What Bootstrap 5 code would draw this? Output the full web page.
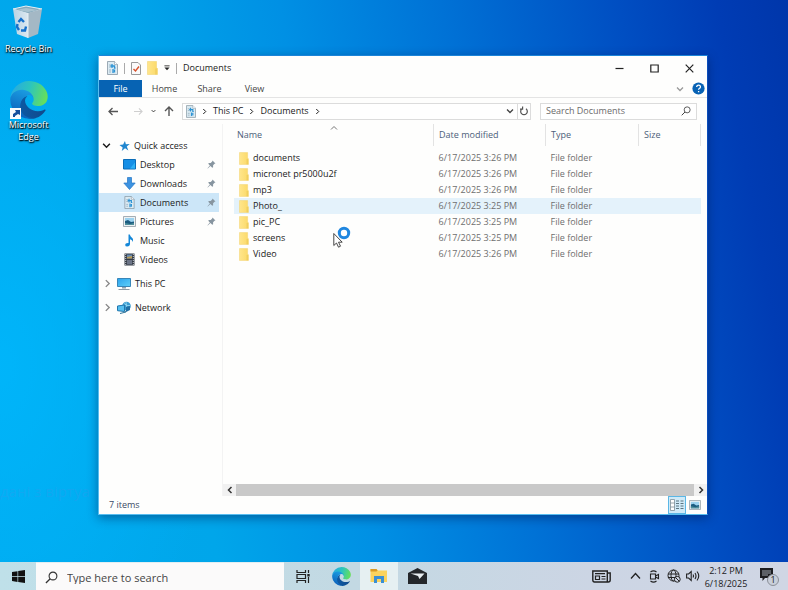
<!DOCTYPE html>
<html lang="en">
<head>
<meta charset="utf-8">
<meta name="viewport" content="width=device-width, initial-scale=1">
<title>Documents</title>
<link href="https://cdn.jsdelivr.net/npm/bootstrap@5.3.0/dist/css/bootstrap.min.css" rel="stylesheet">
<style>
body{font-family:"Open Sans","Noto Sans",sans-serif;font-size:9px;line-height:12px;color:#1b1b1b;
 background:radial-gradient(ellipse 220px 360px at 0 62%,rgba(0,186,255,.7),rgba(0,186,255,0)),linear-gradient(80deg,#00a9ee 0%,#00a6ea 25%,#0090e4 43%,#0072d6 61%,#004ec2 81%,#003cb4 92%,#0036aa 100%)}
button{color:inherit;background:none;border:0;padding:0;line-height:12px}
a{color:inherit;text-decoration:none}
svg{display:block;flex:none}
.desk-icons{width:57px;padding-top:5px;gap:26px}
.desk-icons a{color:#fff;text-shadow:0 1px 2px #000,1px 1px 1px #000;line-height:12px}
.ghost{left:0;bottom:59px;font-size:15px;line-height:24px;color:rgba(60,150,235,.3);z-index:0}
.win{margin:55px 80px 47px 41px;background:#fefefd;border:1px solid #58bdf0;border-right-color:#0a4dbb;border-top-color:#1c84d8;box-shadow:0 3px 10px rgba(0,20,70,.45);z-index:1;min-width:0}
.titlebar{height:24px;padding-left:8px;gap:6px}
.vsep{width:1px;height:11px;background:#aaa}
.ctl{width:35px;height:23px}
.ribbon{height:18px;padding-right:2px;border-bottom:1px solid #e4e4e4;color:#444}
.ribbon .file-tab{width:43px;background:#0763b3;color:#fff}
.ribbon .tab{width:45px}
.ribbon .expand{color:#999}
.addr-row{height:26px;padding:0 10px 0 9px;gap:9px}
.addr,.search-box{height:17px;border:1px solid #dcdcdc;background:#fff}
.addr{gap:6px;padding-left:3px}
.refresh{width:13px;height:15px;border-left:1px solid #dcdcdc}
.drop{margin-right:-3px;color:#444}
.search-box{width:157px;padding:0 5px}
.search-box input{border:0;outline:0;background:none;padding:0;font-size:9px;color:#333}
.search-box input::placeholder{color:#6b6b6b;opacity:1}
.side{width:124px;padding-top:12px;border-right:1px solid #f3f3f3}
.side a{height:19px;margin-right:3px}
.side .sub{padding:0 3px 0 24px;gap:4px}
.side .top-item{padding-left:3px;gap:4px}
.side .spaced{margin-top:5px}
.side .picked{background:#cce6f8}
.files{margin:0 6px 0 11px}
.files table{table-layout:fixed;width:100%;border-collapse:collapse}
.files th{height:22px;font-weight:400;color:#4c607a;padding:0 0 0 5px;border-right:1px solid #e3e3e3;position:relative}
.files th:first-child{padding-left:3px}
.files td{height:16px;padding:0 0 0 5px;color:#6e6e6e;white-space:nowrap}
.files td:first-child{color:#1b1b1b}
.files .gap-row td{height:4px}
.files tr.hover-row{background:#e4f2fb}
.c-date{width:112px}.c-type{width:93px}.c-size{width:62px}
.sort{left:50%;top:1px;margin-left:-4px}
.hbar{height:12px;background:#f1f1f1}
.hbar button{width:13px}
.thumb{background:#c9c9c9}
.status{height:18px;padding:0 4px 0 10px;color:#3a4a66}
.view-on{width:18px;height:18px;background:#cfeaf8;border:1px solid #5bb7e6}
.view-off{width:17px;height:18px}
.pointer{left:234px;top:168px;z-index:2;pointer-events:none}
.taskbar{height:28px;background:linear-gradient(90deg,#bfe0e9,#c3d9e3 45%,#ccd5e4 75%,#d0d6e4);z-index:2}
.start{width:36px}
.task-search{width:248px;background:#fbfafa;padding:2px 9px 0;gap:9px;border-top:1px solid #e2eef2}
.task-search input{border:0;outline:0;background:none;padding:0;font-size:11px;color:#333}
.task-search input::placeholder{color:#454545;opacity:1}
.task{width:38px}
.task-on{background:#e6f0f2}
.tray{width:19px}
.news{width:24px;margin-right:13px}
.clock{width:48px;line-height:13px;padding-top:1px}
</style>
<script src="https://cdn.jsdelivr.net/npm/bootstrap@5.3.0/dist/js/bootstrap.bundle.min.js"></script>
</head>
<body class="vh-100 d-flex flex-column overflow-hidden">
<svg width="0" height="0" class="position-absolute" aria-hidden="true">
<defs>
<linearGradient id="eg1" x1="0" x2="1"><stop offset="0" stop-color="#0c59a4"/><stop offset="1" stop-color="#114a8b"/></linearGradient>
<linearGradient id="eg2" x1=".6" y1="0" x2=".3" y2="1"><stop offset="0" stop-color="#1ba0e4"/><stop offset="1" stop-color="#0a5cb8"/></linearGradient>
<linearGradient id="eg3" x1="0" y1=".3" x2="1" y2=".5"><stop offset="0" stop-color="#28a8e4"/><stop offset=".5" stop-color="#2cc5bd"/><stop offset="1" stop-color="#67df5b"/></linearGradient>
<linearGradient id="fold" x1="0" x2="1"><stop offset="0" stop-color="#ffe68c"/><stop offset="1" stop-color="#fbd968"/></linearGradient>
<linearGradient id="scr" x1="0" y1="0" x2="1" y2="1"><stop offset="0" stop-color="#2ba3ee"/><stop offset="1" stop-color="#5fd0f8"/></linearGradient>
<linearGradient id="binface" x1="0" x2="1"><stop offset="0" stop-color="#b9d3e4"/><stop offset="1" stop-color="#dce8f0"/></linearGradient>
</defs>
<symbol id="edge" viewBox="0 0 256 260"><path fill="url(#eg1)" d="M235.680 195.460a93.730 93.730 0 0 1-10.540 4.710 101.870 101.870 0 0 1-35.900 6.460c-47.320 0-88.540-32.550-88.540-74.320A31.480 31.480 0 0 1 117.130 105c-42.800 1.800-53.800 46.400-53.800 72.530 0 73.880 68.090 81.370 82.760 81.370 7.910 0 19.840-2.300 27-4.560l1.310-.44a128.340 128.340 0 0 0 66.600-52.800 4 4 0 0 0-5.320-5.640z"/><path fill="url(#eg2)" d="M105.730 241.420a79.200 79.200 0 0 1-22.740-21.340 80.720 80.720 0 0 1 29.530-120c3.120-1.470 8.450-4.130 15.540-4a32.350 32.350 0 0 1 25.690 13 31.880 31.880 0 0 1 6.360 18.660c0-.21 24.460-79.600-80-79.600-43.900 0-80 41.660-80 78.210a130.150 130.150 0 0 0 12.110 56 128 128 0 0 0 156.380 67.110 75.550 75.550 0 0 1-62.780-8z"/><path fill="url(#eg3)" d="M152.330 148.860c-.81 1.050-3.300 2.500-3.300 5.660 0 2.610 1.700 5.120 4.720 7.230 14.380 10 41.490 8.680 41.560 8.680a59.560 59.560 0 0 0 30.270-8.350 61.380 61.380 0 0 0 30.430-52.880c.26-22.410-8-37.310-11.340-43.910C223.460 23.840 177.720 0 128 0A128 128 0 0 0 0 126.200c.48-36.540 36.800-66.050 80-66.050 3.500 0 23.460.34 42 10.070 16.340 8.580 24.900 18.940 30.850 29.210 6.180 10.670 7.280 24.150 7.280 29.520s-2.740 13.330-7.800 19.910z"/></symbol>
<symbol id="folder" viewBox="0 0 11 14"><path d="M.5.5h9v6l1 1v6H.5z" fill="url(#fold)" stroke="#f3d574" stroke-width=".6"/><path d="M9 7.500v6" stroke="#e6c252" stroke-width=".8"/></symbol>
<symbol id="doc" viewBox="0 0 11 14"><path d="M.5.5h7l3 3v10H.5z" fill="#dcebf3" stroke="#8797a3" stroke-width=".8"/><path d="M7.500.5v3h3" fill="#fff" stroke="#8797a3" stroke-width=".6"/><path d="M2 4h2M2 6h2M2 9h2M2 11h2" stroke="#8fa9b9" stroke-width=".8"/><path d="M5 3v4M3.500 5h4v2h1M6 8v4M7.500 8.500v3" stroke="#2c93d4" stroke-width="1.300" fill="none"/></symbol>
<symbol id="pin" viewBox="0 0 9 9"><path d="M5.500.5l3 3-1 .3-1.400 1.500v1.900l-.8.6-1.900-1.900L.8 8.500l-.3-.3 2.400-2.700L1.200 3.800l.7-.7h1.800l1.500-1.500z" fill="#8795a0"/></symbol>
<symbol id="right" viewBox="0 0 6 8"><path d="M1.500 1l3 3-3 3" fill="none" stroke="currentColor" stroke-width="1.200"/></symbol>
<symbol id="down" viewBox="0 0 8 6"><path d="M1 1.500l3 3 3-3" fill="none" stroke="currentColor" stroke-width="1.300"/></symbol>
<symbol id="lens" viewBox="0 0 14 14"><circle cx="8.600" cy="5.400" r="4.200" fill="none" stroke="currentColor" stroke-width="1.200"/><path d="M5.600 8.400L1 13" stroke="currentColor" stroke-width="1.400"/></symbol>
<symbol id="picture" viewBox="0 0 13 11"><path d="M.5.5h12v10H.5z" fill="#edf1f3" stroke="#8f9ba3" stroke-width=".8"/><path d="M2 2h9v7H2z" fill="#9cd2ef"/><path d="M2 5l3-1 3 2 3-.5V9H2z" fill="#1c5c80"/><path d="M2 7l5 1 4-1v2H2z" fill="#4f8f9b"/></symbol>
</svg>

<main class="flex-grow-1 d-flex align-items-stretch position-relative">
 <span class="ghost position-absolute text-nowrap">дані з віртуа</span>
 <nav class="desk-icons d-flex flex-column flex-shrink-0 align-items-center text-center text-nowrap" aria-label="Desktop">
  <a href="#" class="d-flex flex-column align-items-center gap-1">
   <svg width="32" height="34" viewBox="0 0 32 34"><path d="M1 4l13-3 16 3-14 5z" fill="#84a9bd" stroke="#e6f0f5" stroke-width="1"/><path d="M4 5l10-2 12 2-10 2z" fill="#a9c3d0"/><path d="M1 4l15 4v25L5 29z" fill="url(#binface)"/><path d="M16 8l14-4-4 25-10 4z" fill="#a4b8c5"/><path d="M16 8v25" stroke="#e6eef3"/><path d="M6.500 17l2.500-3 3 3M5.500 19l-.500 3 2 3M9 25.500h4l1-4" stroke="#1570cb" stroke-width="2.400" fill="none"/></svg>
   <span>Recycle Bin</span></a>
  <a href="#" class="d-flex flex-column align-items-center">
   <span class="position-relative"><svg width="38" height="38"><use href="#edge"/></svg>
    <svg class="position-absolute start-0 bottom-0" width="11" height="11" viewBox="0 0 11 11"><path d="M0 0h11v11H0z" fill="#f7fafc"/><path d="M3 9V6l3-2-1-2h5v5L8 6 5 8v1z" fill="#134f9c"/></svg></span>
   <span>Microsoft<br>Edge</span></a>
 </nav>

 <section class="win flex-grow-1 d-flex flex-column position-relative" aria-label="Documents">
  <header class="titlebar d-flex align-items-center">
   <svg width="11" height="14"><use href="#doc"/></svg>
   <span class="vsep"></span>
   <svg width="10" height="13" viewBox="0 0 10 13"><path d="M.5.5h6.500l2.500 2.500v9.500h-9z" fill="#fafafa" stroke="#999"/><path d="M2.500 7l2 2 3.500-4.500" fill="none" stroke="#d8522c" stroke-width="1.400"/></svg>
   <svg width="11" height="14"><use href="#folder"/></svg>
   <button aria-label="Customize toolbar"><svg width="6" height="6" viewBox="0 0 7 7"><path d="M.5 1h6" stroke="#222"/><path d="M.5 3h6l-3 3z" fill="#222"/></svg></button>
   <span class="vsep"></span>
   <span>Documents</span>
   <div class="ms-auto d-flex">
    <button class="ctl d-grid" aria-label="Minimize"><svg class="m-auto" width="9" height="9" viewBox="0 0 9 9"><path d="M.5 4.500h8" stroke="#222" stroke-width="1.200"/></svg></button>
    <button class="ctl d-grid" aria-label="Maximize"><svg class="m-auto" width="9" height="9" viewBox="0 0 9 9"><path d="M.8 1h7.400v7H.8z" fill="none" stroke="#222" stroke-width="1.200"/></svg></button>
    <button class="ctl d-grid" aria-label="Close"><svg class="m-auto" width="9" height="9" viewBox="0 0 9 9"><path d="M.7.7l7.600 7.600M8.300.7L.7 8.300" stroke="#222" stroke-width="1.200"/></svg></button>
   </div>
  </header>
  <div class="ribbon d-flex align-items-stretch">
   <button class="file-tab">File</button><button class="tab">Home</button><button class="tab">Share</button><button class="tab">View</button>
   <button class="expand ms-auto me-2" aria-label="Expand ribbon"><svg width="8" height="6"><use href="#down"/></svg></button>
   <button aria-label="Help"><svg width="13" height="13" viewBox="0 0 13 13"><circle cx="6.500" cy="6.500" r="6.100" fill="#0862b4"/><path d="M4.700 5q0-1.800 1.900-1.800T8.400 4.900Q8.400 6 7.300 6.500q-.7.400-.7 1.300M6.600 9v1.300" fill="none" stroke="#fff" stroke-width="1.300"/></svg></button>
  </div>
  <div class="addr-row d-flex align-items-center">
   <div class="d-flex align-items-center flex-grow-1">
    <button aria-label="Back"><svg width="10" height="9" viewBox="0 0 10 9"><path d="M10 4.500H1M4.500 1L1 4.500 4.500 8" fill="none" stroke="#555" stroke-width="1.300"/></svg></button>
    <button class="ms-3" aria-label="Forward"><svg width="9" height="9" viewBox="0 0 10 9"><path d="M0 4.500h9M5.500 1L9 4.500 5.500 8" fill="none" stroke="#cfcfcf" stroke-width="1.200"/></svg></button>
    <button class="ms-2" aria-label="Recent locations"><svg width="5" height="4"><use href="#down"/></svg></button>
    <button class="ms-2" aria-label="Up"><svg width="10" height="10" viewBox="0 0 10 10"><path d="M5 10V1M1 5l4-4 4 4" fill="none" stroke="#555" stroke-width="1.400"/></svg></button>
    <div class="addr d-flex align-items-center flex-grow-1 ms-2">
     <svg width="10" height="13"><use href="#doc"/></svg>
     <svg width="5" height="7"><use href="#right"/></svg><a href="#">This PC</a>
     <svg width="5" height="7"><use href="#right"/></svg><a href="#">Documents</a>
     <svg width="5" height="7"><use href="#right"/></svg>
     <button class="drop ms-auto" aria-label="Previous locations"><svg width="8" height="6"><use href="#down"/></svg></button>
     <button class="refresh d-grid" aria-label="Refresh"><svg class="m-auto" width="8" height="10" viewBox="0 0 8 10"><path d="M6 2.800A3.300 3.300 0 1 1 2 2.800M2.600.4v2.700H0" fill="none" stroke="#555" stroke-width="1.200"/></svg></button>
    </div>
   </div>
   <div class="search-box d-flex align-items-center"><input class="flex-grow-1 w-100" type="search" placeholder="Search Documents" aria-label="Search Documents"><svg width="10" height="10" color="#444"><use href="#lens"/></svg></div>
  </div>
  <div class="d-flex flex-grow-1 align-items-stretch">
   <nav class="side d-flex flex-column flex-shrink-0" aria-label="Folders">
    <a href="#" class="top-item d-flex align-items-center"><svg class="me-1" width="9" height="7"><use href="#down"/></svg><svg width="11" height="12" viewBox="0 0 12 12"><path d="M6.500.5l1 3.500 4.200-.3L8.500 6.500l1.700 4.300-3.600-2.300L3 11.500l1-4L.5 5l4-.6z" fill="#2186cf"/></svg><span>Quick access</span></a>
    <a href="#" class="sub d-flex align-items-center"><svg width="13" height="11" viewBox="0 0 13 11"><path d="M.5.5h12v9.500H.5z" fill="#168fe6" stroke="#0b6db8"/><path d="M7 9.500l5-6v6z" fill="#2eb0f5"/></svg><span>Desktop</span><svg class="ms-auto" width="9" height="9"><use href="#pin"/></svg></a>
    <a href="#" class="sub d-flex align-items-center"><svg width="13" height="13" viewBox="0 0 13 13"><path d="M4.500.5h4V6h3.700l-5.700 6.500L.8 6h3.700z" fill="#3d93e1" stroke="#2376c6" stroke-width=".7"/></svg><span>Downloads</span><svg class="ms-auto" width="9" height="9"><use href="#pin"/></svg></a>
    <a href="#" class="sub picked d-flex align-items-center"><svg width="13" height="13"><use href="#doc"/></svg><span>Documents</span><svg class="ms-auto" width="9" height="9"><use href="#pin"/></svg></a>
    <a href="#" class="sub d-flex align-items-center"><svg width="13" height="11"><use href="#picture"/></svg><span>Pictures</span><svg class="ms-auto" width="9" height="9"><use href="#pin"/></svg></a>
    <a href="#" class="sub d-flex align-items-center"><svg width="13" height="13" viewBox="0 0 13 13"><path d="M5.500.5h1.300q.4 2 2.200 3.300t.5 4.200q.1-2-2.500-2.800v5q-.3 2.300-2.800 2.300-2 0-2-1.500 0-2.200 3.300-2z" fill="#1487d8"/></svg><span>Music</span></a>
    <a href="#" class="sub d-flex align-items-center"><svg width="13" height="13" viewBox="0 0 13 13"><path d="M1.500.5h10v12h-10z" fill="#353c46"/><path d="M4 1.500h5v4H4z" fill="#678ab1"/><path d="M4 7h5v4.500H4z" fill="#6b7486"/><path d="M4 4l5-1v2.500H4z" fill="#b79c58"/><path d="M2.700 1v11M10.300 1v11" stroke="#c6cbd1" stroke-dasharray="1"/></svg><span>Videos</span></a>
    <a href="#" class="top-item spaced d-flex align-items-center"><svg width="11" height="9" color="#888"><use href="#right"/></svg><svg width="14" height="14" viewBox="0 0 14 14"><path d="M.5 1.500h13v8H.5z" fill="url(#scr)" stroke="#3886b8"/><path d="M5 10h4v1.500H5z" fill="#8fa2ae"/><path d="M1.500 12.500h11" stroke="#8d9ba5"/></svg><span>This PC</span></a>
    <a href="#" class="top-item spaced d-flex align-items-center"><svg width="11" height="9" color="#888"><use href="#right"/></svg><svg width="14" height="14" viewBox="0 0 14 14"><circle cx="9.500" cy="5" r="4.300" fill="#399bd0"/><path d="M7 2.500l3 2 3 0M9 1l1 8" stroke="#9bdaf2" fill="none" stroke-width=".8"/><path d="M.5 5l7-1v6.500l-7-.8z" fill="#55bff0" stroke="#2176ad"/><path d="M3 12.500l6-1.500-1-1.500" fill="none" stroke="#2f7498"/><path d="M9 6l4-1v4l-4 2z" fill="#1f6ea4"/></svg><span>Network</span></a>
   </nav>
   <div class="flex-grow-1 d-flex flex-column">
    <div class="files">
     <table>
      <colgroup><col><col class="c-date"><col class="c-type"><col class="c-size"></colgroup>
      <thead><tr><th>Name<svg class="sort position-absolute" width="8" height="6" viewBox="0 0 8 6"><path d="M1 4.500l3-3 3 3" fill="none" stroke="#777"/></svg></th><th>Date modified</th><th>Type</th><th>Size</th></tr></thead>
      <tbody>
      <tr class="gap-row"><td colspan="4"></td></tr>
      <tr><td><span class="d-flex align-items-center gap-1"><svg width="10" height="13"><use href="#folder"/></svg>documents</span></td><td>6/17/2025 3:26 PM</td><td>File folder</td><td></td></tr>
      <tr><td><span class="d-flex align-items-center gap-1"><svg width="10" height="13"><use href="#folder"/></svg>micronet pr5000u2f</span></td><td>6/17/2025 3:26 PM</td><td>File folder</td><td></td></tr>
      <tr><td><span class="d-flex align-items-center gap-1"><svg width="10" height="13"><use href="#folder"/></svg>mp3</span></td><td>6/17/2025 3:26 PM</td><td>File folder</td><td></td></tr>
      <tr class="hover-row"><td><span class="d-flex align-items-center gap-1"><svg width="10" height="13"><use href="#folder"/></svg>Photo_</span></td><td>6/17/2025 3:25 PM</td><td>File folder</td><td></td></tr>
      <tr><td><span class="d-flex align-items-center gap-1"><svg width="10" height="13"><use href="#folder"/></svg>pic_PC</span></td><td>6/17/2025 3:25 PM</td><td>File folder</td><td></td></tr>
      <tr><td><span class="d-flex align-items-center gap-1"><svg width="10" height="13"><use href="#folder"/></svg>screens</span></td><td>6/17/2025 3:25 PM</td><td>File folder</td><td></td></tr>
      <tr><td><span class="d-flex align-items-center gap-1"><svg width="10" height="13"><use href="#folder"/></svg>Video</span></td><td>6/17/2025 3:26 PM</td><td>File folder</td><td></td></tr>
      </tbody>
     </table>
    </div>
    <div class="hbar d-flex mt-auto">
     <button class="d-grid" aria-label="Scroll left"><svg class="m-auto" width="6" height="8" viewBox="0 0 6 8"><path d="M4.500 1l-3 3 3 3" fill="none" stroke="#333" stroke-width="1.500"/></svg></button>
     <div class="thumb flex-grow-1"></div>
     <button class="d-grid" aria-label="Scroll right"><svg class="m-auto" width="6" height="8" viewBox="0 0 6 8"><path d="M1.500 1l3 3-3 3" fill="none" stroke="#333" stroke-width="1.500"/></svg></button>
    </div>
   </div>
  </div>
  <footer class="status d-flex align-items-center">
   <span>7 items</span>
   <button class="view-on d-grid ms-auto" aria-label="Details view"><svg class="m-auto" width="14" height="12" viewBox="0 0 14 12"><path d="M.5.5h4v11h-4zM.5 4h4M.5 8h4" fill="#fff" stroke="#7f8f98" stroke-width=".8"/><path d="M6 2h3M10.500 2h3M6 4.500h3M10.500 4.500h3M6 7h3M10.500 7h3M6 9.500h3M10.500 9.500h3" stroke="#5b7480"/></svg></button>
   <button class="view-off d-grid" aria-label="Thumbnail view"><svg class="m-auto" width="12" height="10"><use href="#picture"/></svg></button>
  </footer>
  <svg class="pointer position-absolute" width="20" height="24" viewBox="0 0 20 24"><circle cx="11" cy="9" r="4.700" fill="#fff" stroke="#2087e0" stroke-width="3"/><path d="M.8 9.500v12l2.700-2.500 2 4.200 2-1-2-4h3.700z" fill="#fff" stroke="#333" stroke-width=".9"/></svg>
 </section>
</main>

<footer class="taskbar d-flex align-items-stretch flex-shrink-0">
 <button class="start d-grid" aria-label="Start"><svg class="m-auto" width="13" height="13" viewBox="0 0 13 13"><path d="M0 2l5.500-.8v5H0zM6.200 1L13 0v6.200H6.200zM0 6.900h5.500v5L0 11.100zM6.200 6.900H13V13l-6.800-1z" fill="#111"/></svg></button>
 <div class="task-search d-flex align-items-center"><svg width="13" height="13" color="#333"><use href="#lens"/></svg><input class="flex-grow-1" type="search" placeholder="Type here to search" aria-label="Type here to search"></div>
 <button class="task d-grid" aria-label="Task view"><svg class="m-auto" width="14" height="13" viewBox="0 0 14 13"><path d="M1 0v2.500h8.500V0M1 13v-2.500h8.500V13M1 4.500h8.500v4H1zM12.500 0v3M12.500 7v6" fill="none" stroke="#222" stroke-width="1.200"/><path d="M11.300 4h2.400v2.400h-2.400z" fill="#222"/></svg></button>
 <button class="task d-grid" aria-label="Microsoft Edge"><svg class="m-auto" width="19" height="19"><use href="#edge"/></svg></button>
 <button class="task task-on d-grid" aria-label="File Explorer"><svg class="m-auto" width="18" height="16" viewBox="0 0 18 16"><path d="M.5 1h6l1.500 1.500h9V14H.5z" fill="#fbd35d"/><path d="M.5 1h6l1 1.500-1 1h-6z" fill="#d99a24"/><path d="M4 8h10v7h-3v-4H7v4H4z" fill="#3b8fd3"/></svg></button>
 <button class="task d-grid" aria-label="Mail"><svg class="m-auto" width="19" height="16" viewBox="0 0 19 16"><path d="M0 5L9.500 0 19 5V16H0z" fill="#24272b"/><path d="M2.500 5.500h14L11.500 11 10 8z" fill="#e8eef1"/></svg></button>
 <div class="ms-auto d-flex align-items-stretch">
  <button class="news d-grid" aria-label="News"><svg class="m-auto" width="19" height="13" viewBox="0 0 19 13"><path d="M.8 1h14.500v11H2.500Q.8 12 .8 10zM15.300 3h2.900v7q0 2-2 2h-2" fill="none" stroke="#222" stroke-width="1.400"/><path d="M3 3.700h10M9.500 6.500h4M9.500 9h4" stroke="#222" stroke-width="1.200"/><path d="M3.500 6h4v3.500h-4z" fill="none" stroke="#222" stroke-width="1.200"/></svg></button>
  <button class="tray d-grid" aria-label="Hidden icons"><svg class="m-auto" width="11" height="8" viewBox="0 0 11 8"><path d="M1 6.500l4.500-5 4.500 5" fill="none" stroke="#222" stroke-width="1.300"/></svg></button>
  <button class="tray d-grid" aria-label="Meet now"><svg class="m-auto" width="11" height="13" viewBox="0 0 11 13"><path d="M1.500 4h5v5h-5zM6.500 6l3-1.500v4l-3-1.500M1.500 2Q4.500-.2 7.500 2M1.500 11q3 2.200 6 0" fill="none" stroke="#222" stroke-width="1.100"/></svg></button>
  <button class="tray d-grid" aria-label="Network"><svg class="m-auto" width="14" height="14" viewBox="0 0 14 14"><circle cx="6.500" cy="6.500" r="5.500" fill="none" stroke="#222"/><ellipse cx="6.500" cy="6.500" rx="2.500" ry="5.500" fill="none" stroke="#222"/><path d="M1 5h11M1 8.500h11" stroke="#222"/><circle cx="10.300" cy="10.300" r="2.900" fill="#d0d6e4" stroke="#222"/><path d="M8.500 8.500l3.600 3.600" stroke="#222"/></svg></button>
  <button class="tray d-grid" aria-label="Volume"><svg class="m-auto" width="14" height="12" viewBox="0 0 14 12"><path d="M.6 4h2l2.600-2.500v9L2.600 8h-2zM7 4.500q1 1.500 0 3M9 3q2 3 0 6M11 1.500q3.500 4.500 0 9" fill="none" stroke="#222" stroke-width="1.100"/></svg></button>
  <button class="clock text-center text-nowrap">2:12 PM<br>6/18/2025</button>
  <button class="task d-grid" aria-label="Notifications"><svg class="m-auto" width="20" height="19" viewBox="0 0 20 19"><path d="M1 1h13v10H6l-2.500 3v-3H1z" fill="#1c1d20"/><path d="M3 4h9M3 6h9M3 8h6" stroke="#bfc6d2" stroke-width=".8"/><circle cx="14" cy="13" r="5.500" fill="#c9cfda" stroke="#8b8f98"/><text x="14" y="16" text-anchor="middle" font-size="9" fill="#222">1</text></svg></button>
 </div>
</footer>
</body>
</html>
